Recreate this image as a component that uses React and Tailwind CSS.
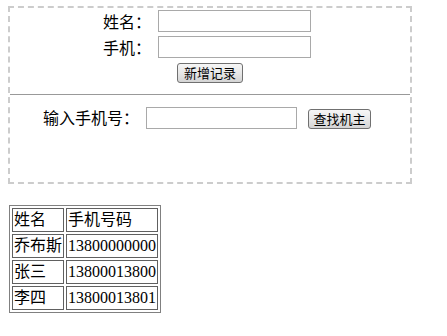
// Phone-owner lookup page: add-record form, search row and a bordered result table.
const CJK = "font-['Noto_Sans_CJK_SC',sans-serif]";
const SERIF = "font-['Liberation_Serif','Noto_Sans_CJK_SC',serif]";

const ROWS = [
  { name: "乔布斯", phone: "13800000000" },
  { name: "张三", phone: "13800013800" },
  { name: "李四", phone: "13800013801" },
];

function Btn({ children, w }) {
  return (
    <button
      className={`${w} h-[20px] rounded-[3px] border border-[#707070] bg-gradient-to-b from-[#f6f6f6] via-[#e8e8e8] to-[#d4d4d4] text-[13px] leading-[18px] text-black ${CJK}`}
    >
      {children}
    </button>
  );
}

function Field({ w }) {
  return <input className={`${w} h-[22px] border border-[#a9a9a9] bg-white outline-none`} />;
}

export default function App() {
  return (
    <div className={`min-h-screen bg-white pl-[8px] pt-[6px] text-black ${CJK}`}>
      <div className="w-[404px] border-2 border-dashed border-[#cccccc]">
        {/* add record */}
        <div className="flex h-[86px] flex-col pt-[2px]">
          <div className="ml-[93px] flex flex-col gap-[4px]">
            <div className="flex items-center gap-[7px]">
              <span className="w-[48px] text-[16px] leading-[20px]">姓名：</span>
              <Field w="w-[153px]" />
            </div>
            <div className="flex items-center gap-[7px]">
              <span className="w-[48px] text-[16px] leading-[20px]">手机：</span>
              <Field w="w-[153px]" />
            </div>
          </div>
          <div className="mt-[5px] flex justify-center">
            <Btn w="w-[66px]">新增记录</Btn>
          </div>
        </div>

        <div className="h-px bg-[#999999]" />

        {/* search */}
        <div className="flex h-[87px] items-start pl-[33px]">
          <span className="mt-[12px] text-[16px] leading-[20px]">输入手机号：</span>
          <div className="ml-[7px] mt-[11px]">
            <Field w="w-[151px]" />
          </div>
          <div className="ml-[11px] mt-[10px]">
            <Btn w="w-[63px]">查找机主</Btn>
          </div>
        </div>
      </div>

      <table
        className={`ml-[1px] mt-[21px] border-separate border-spacing-[2px] border border-[#808080] text-[16px] leading-[20px] ${SERIF}`}
      >
        <tbody>
          <tr>
            <td className="border border-[#606060] p-[1px]">姓名</td>
            <td className="border border-[#606060] p-[1px]">手机号码</td>
          </tr>
          {ROWS.map((r) => (
            <tr key={r.phone}>
              <td className="border border-[#606060] p-[1px]">{r.name}</td>
              <td className="border border-[#606060] p-[1px]">{r.phone}</td>
            </tr>
          ))}
        </tbody>
      </table>
    </div>
  );
}
